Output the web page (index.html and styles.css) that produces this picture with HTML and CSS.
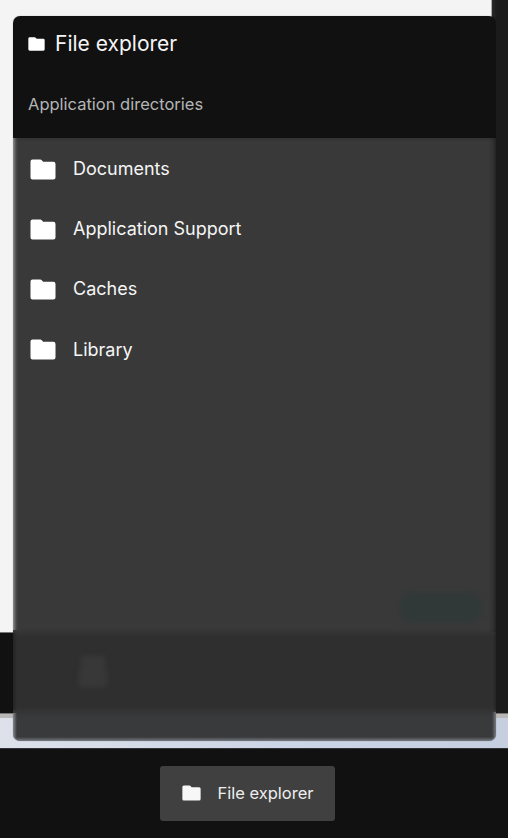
FILE: index.html
```
<!DOCTYPE html>
<html lang="en">
<head>
<meta charset="utf-8">
<title>File explorer</title>
<link rel="stylesheet" href="styles.css">
</head>
<body>
<svg class="defs" width="0" height="0">
  <symbol id="folder" viewBox="-.5 -.5 26 21" preserveAspectRatio="none">
    <path d="M2.1 0H9.6Q10.6 0 11.3.8L12.6 2.3H22.9Q25 2.3 25 4.4V17.9Q25 20 22.9 20H2.1Q0 20 0 17.9V2.1Q0 0 2.1 0Z"/>
  </symbol>
</svg>
<div class="desktop">
  <div class="wallpaper">
    <div class="backdrop">
      <div class="sheet"></div>
      <div class="side"></div>
    </div>
    <div class="ledge"></div>
  </div>
  <main class="window">
    <header class="window-header">
      <h1 class="title"><svg class="title-icon"><use href="#folder"/></svg><span>File explorer</span></h1>
      <p class="subtitle">Application directories</p>
    </header>
    <div class="window-body">
      <ul class="directories">
        <li><svg><use href="#folder"/></svg><span>Documents</span></li>
        <li><svg><use href="#folder"/></svg><span>Application Support</span></li>
        <li><svg><use href="#folder"/></svg><span>Caches</span></li>
        <li><svg><use href="#folder"/></svg><span>Library</span></li>
      </ul>
      <div class="ghost-button"></div>
      <div class="ghost-icon"><i></i><i></i></div>
    </div>
  </main>
  <footer class="taskbar">
    <button class="task"><svg><use href="#folder"/></svg><span>File explorer</span></button>
  </footer>
</div>
</body>
</html>
```
FILE: styles.css
```
* { box-sizing: border-box; }
body { margin: 0; font-family: Inter, "Liberation Sans", sans-serif; }
h1, p, ul { margin: 0; padding: 0; font-weight: 400; }
svg { display: block; fill: #fff; flex: none; overflow: visible; }
.defs { position: absolute; }
.desktop {
  position: relative;
  display: flex;
  flex-direction: column;
  height: 838px;
  overflow: hidden;
  background: #111;
}
.wallpaper {
  height: 749px;
  background: linear-gradient(90deg, #dce1ea, #ccd5e5 55%, #c6cfdf);
  border-bottom: 1px solid #303237;
}
.backdrop { display: flex; height: 713px; background: #111; }
.sheet {
  width: 492px;
  height: 633px;
  background: #f4f4f4;
  border-right: 1px solid #aaa;
  border-bottom: 1px solid #777;
}
.side { flex: 1; background: linear-gradient(90deg, #292929, #1b1b1b 5px); }
.ledge { height: 5px; background: #b9b7b5; border-top: 1px solid #777; }

.window {
  position: absolute;
  left: 13px;
  top: 16px;
  width: 483px;
  height: 725px;
  display: flex;
  flex-direction: column;
  border-radius: 7px;
  overflow: hidden;
  box-shadow: 0 0 1px rgba(0, 0, 0, .45);
}
.window-header { height: 122px; background: #111; color: #f5f5f5; padding: 13px 15px 0; }
.title { display: flex; align-items: center; height: 30px; gap: 10px; font-size: 21px; line-height: 30px; }
.title-icon { width: 17px; height: 14px; margin: 0; }
.subtitle { margin-top: 33px; font-size: 16.5px; line-height: 24px; color: #b5b5b5; }
.window-body {
  position: relative;
  flex: 1;
  background: linear-gradient(#333, #393939 4px, #393939 490px, #2f2f2f 499px, #2f2f2f 568px, #393a3b 580px, #393a3b);
}
.window-body::before,
.window-body::after {
  content: "";
  position: absolute;
  inset: 0;
}
.window-body::before {
  background:
    linear-gradient(90deg, rgba(244, 244, 244, .45), rgba(244, 244, 244, .1) 3px, transparent 5px) left top / 6px 492px no-repeat,
    linear-gradient(90deg, rgba(17, 17, 17, .4), transparent 4px) left 495px / 5px 77px no-repeat,
    linear-gradient(90deg, rgba(220, 226, 235, .45), transparent 4px) left 575px / 5px 28px no-repeat;
}
.window-body::after {
  background:
    linear-gradient(270deg, rgba(17, 17, 17, .55), rgba(17, 17, 17, .2) 3px, transparent 7px) right top / 8px 494px no-repeat,
    linear-gradient(270deg, rgba(17, 17, 17, .4), transparent 3px) right 494px / 4px 78px no-repeat,
    linear-gradient(270deg, rgba(210, 218, 232, .4), transparent 4px) right 574px / 4px 29px no-repeat,
    linear-gradient(0deg, rgba(210, 218, 232, .4), transparent 4px) left bottom / 100% 4px no-repeat;
}
.directories { list-style: none; padding: 1px 0 0 17px; }
.directories li { display: flex; align-items: center; gap: 17px; height: 60.2px; color: #f5f5f5; font-size: 18px; line-height: 28px; }
.directories svg { width: 26px; height: 21px; }
.ghost-button {
  position: absolute;
  left: 387px;
  top: 455px;
  width: 81px;
  height: 29px;
  border-radius: 12px;
  background: #303938;
  filter: blur(3px);
}
.ghost-icon {
  position: absolute;
  left: 66px;
  top: 518px;
  width: 28px;
  filter: blur(2.5px);
}
.ghost-icon i { display: block; width: 24px; height: 15px; margin: 0 auto; background: #383838; }
.ghost-icon i + i { width: 28px; height: 16px; }
.taskbar { display: flex; justify-content: center; align-items: flex-start; height: 89px; padding: 17px 13px 0 0; background: #111; }
.task {
  display: flex;
  align-items: center;
  width: 175px;
  height: 55px;
  padding: 0 0 1px 22px;
  gap: 16.5px;
  border: 0;
  border-radius: 3px;
  background: #404040;
  color: #eee;
  font: 16.5px/24px Inter, "Liberation Sans", sans-serif;
}
.task svg { width: 19px; height: 16px; fill: #f7f7f7; }
```
